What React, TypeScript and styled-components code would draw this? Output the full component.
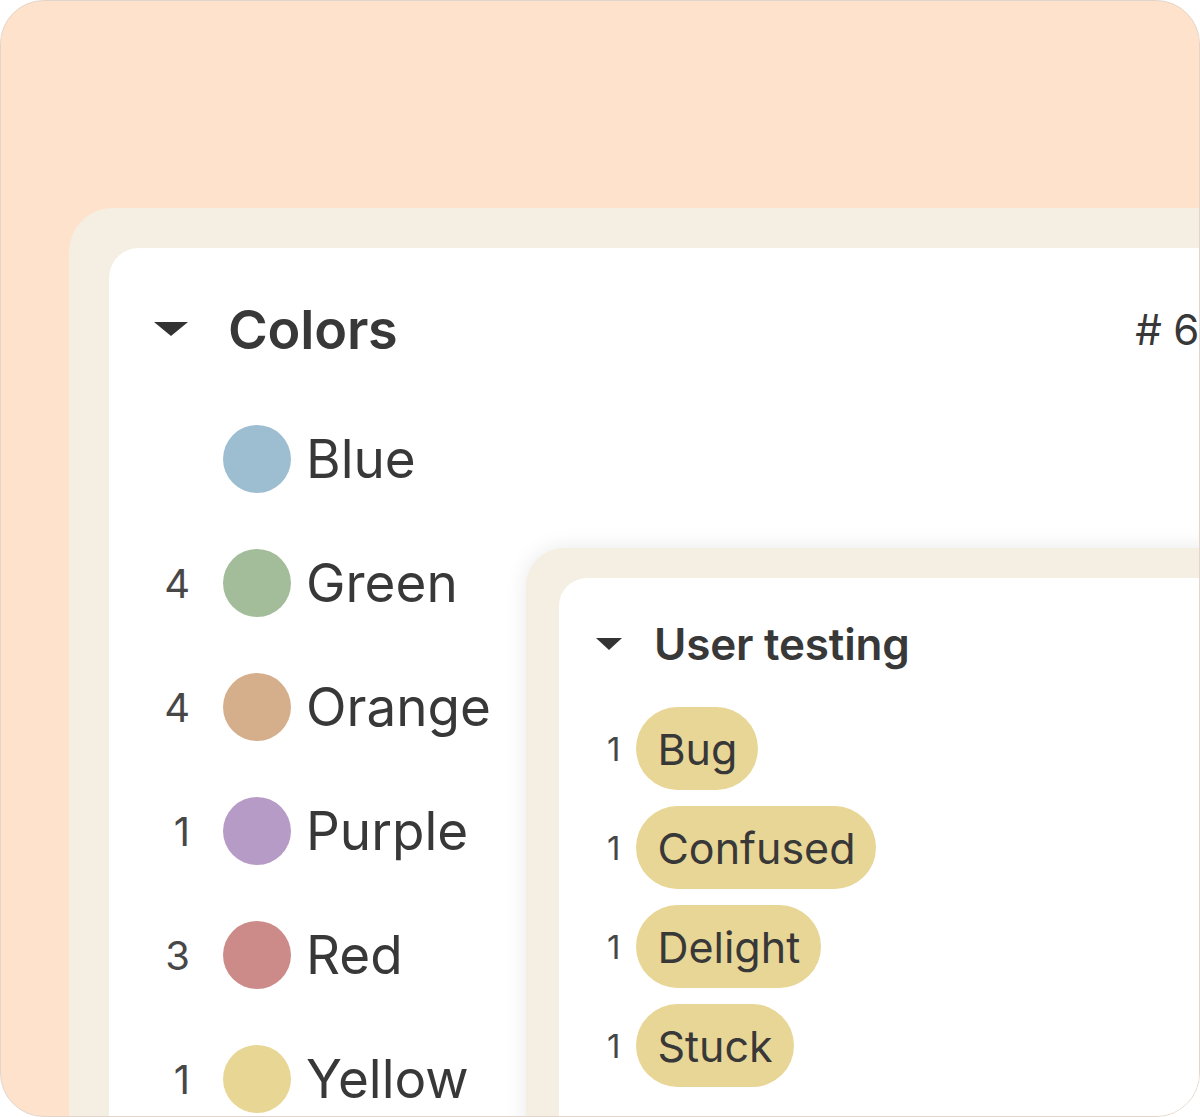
import styled, { createGlobalStyle } from 'styled-components';

const GlobalStyle = createGlobalStyle`
  html, body {
    margin: 0;
    padding: 0;
    background: #ffffff;
  }

  body {
    font-family: Inter, "Noto Sans", sans-serif;
    color: #383838;
  }
`;

const COLORS = {
  PEACH: '#fee2cb',
  BEIGE: '#f5eee2',
  WHITE: '#ffffff',
  TEXT: '#383838',
  MUTED: '#474747',
  CHIP: '#e8d696',
};

const Frame = styled.div`
  box-sizing: border-box;
  width: 1200px;
  height: 1117px;
  border-radius: 44px;
  border: 1px solid #e2d6cc;
  background: ${COLORS.PEACH};
  overflow: hidden;
  padding: 207px 0 0 68px;
`;

const OuterPanel = styled.div`
  width: 1240px;
  height: 1000px;
  padding: 40px 0 0 40px;
  border-radius: 44px 0 0 0;
  background: ${COLORS.BEIGE};
`;

const MainCard = styled.div`
  position: relative;
  box-sizing: border-box;
  width: 1135px;
  height: 960px;
  padding: 50px 45px 0 45px;
  border-radius: 30px 0 0 0;
  background: ${COLORS.WHITE};
`;

const Header = styled.div<{ $size: number; $gap: number }>`
  display: flex;
  align-items: center;
  gap: ${({ $gap }) => $gap}px;
  height: ${({ $size }) => $size + 8}px;
  font-size: ${({ $size }) => $size}px;
  font-weight: 600;
  color: ${COLORS.TEXT};
  letter-spacing: -0.2px;
`;

const Caret = styled.span<{ $w: number; $h: number }>`
  width: 0;
  height: 0;
  border-left: ${({ $w }) => $w / 2}px solid transparent;
  border-right: ${({ $w }) => $w / 2}px solid transparent;
  border-top: ${({ $h }) => $h}px solid #333333;
  flex-shrink: 0;
`;

const Count = styled.span`
  margin-left: auto;
  font-size: 42px;
  font-weight: 400;
  color: ${COLORS.TEXT};
`;

const ColorList = styled.div`
  display: flex;
  flex-direction: column;
  margin-top: 37px;
`;

const ColorRow = styled.div`
  display: grid;
  grid-template-columns: 36px 68px auto;
  column-gap: 33px;
  align-items: center;
  height: 124px;

  & > :last-child {
    margin-left: -18px;
  }
`;

const RowCount = styled.span<{ $size: number }>`
  text-align: right;
  font-size: ${({ $size }) => $size}px;
  color: ${COLORS.MUTED};
`;

const Swatch = styled.span<{ $color: string }>`
  width: 68px;
  height: 68px;
  border-radius: 50%;
  background: ${({ $color }) => $color};
`;

const Label = styled.span`
  font-size: 53px;
  color: ${COLORS.TEXT};
`;

const FloatingPanel = styled.div`
  position: absolute;
  left: 417px;
  top: 300px;
  width: 800px;
  height: 700px;
  padding: 30px 0 0 33px;
  border-radius: 38px 0 0 0;
  background: ${COLORS.BEIGE};
  box-shadow: 0 0 22px rgba(0, 0, 0, 0.09);
`;

const FloatingCard = styled.div`
  box-sizing: border-box;
  height: 100%;
  padding: 40px 0 0 37px;
  border-radius: 28px 0 0 0;
  background: ${COLORS.WHITE};
`;

const TagList = styled.div`
  display: flex;
  flex-direction: column;
  gap: 16px;
  margin: 37px 0 0 11px;
`;

const TagRow = styled.div`
  display: flex;
  align-items: center;
  gap: 16px;
`;

const Chip = styled.span`
  display: inline-flex;
  align-items: center;
  height: 83px;
  padding: 0 21px;
  border-radius: 42px;
  background: ${COLORS.CHIP};
  font-size: 43px;
  color: ${COLORS.TEXT};
`;

const colors = [
  { name: 'Blue', count: '', color: '#9dbdd1' },
  { name: 'Green', count: '4', color: '#a3bc99' },
  { name: 'Orange', count: '4', color: '#d5ae8b' },
  { name: 'Purple', count: '1', color: '#b79bc7' },
  { name: 'Red', count: '3', color: '#cc8a88' },
  { name: 'Yellow', count: '1', color: '#e8d695' },
];

const tags = ['Bug', 'Confused', 'Delight', 'Stuck'];

function App() {
  return (
    <>
      <GlobalStyle />
      <Frame>
        <OuterPanel>
          <MainCard>
            <Header $size={54} $gap={40}>
              <Caret $w={34} $h={14} />
              Colors
              <Count># 6</Count>
            </Header>
            <ColorList>
              {colors.map((item) => (
                <ColorRow key={item.name}>
                  <RowCount $size={40}>{item.count}</RowCount>
                  <Swatch $color={item.color} />
                  <Label>{item.name}</Label>
                </ColorRow>
              ))}
            </ColorList>
            <FloatingPanel>
              <FloatingCard>
                <Header $size={44} $gap={32}>
                  <Caret $w={27} $h={12} />
                  User testing
                </Header>
                <TagList>
                  {tags.map((tag) => (
                    <TagRow key={tag}>
                      <RowCount $size={33}>1</RowCount>
                      <Chip>{tag}</Chip>
                    </TagRow>
                  ))}
                </TagList>
              </FloatingCard>
            </FloatingPanel>
          </MainCard>
        </OuterPanel>
      </Frame>
    </>
  );
}

export default App;
